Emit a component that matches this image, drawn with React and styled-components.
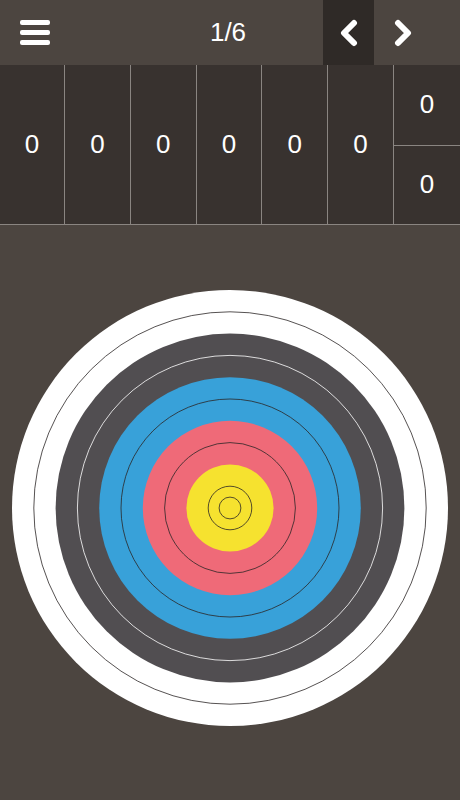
import React from 'react';
import styled, { createGlobalStyle } from 'styled-components';

const GlobalStyle = createGlobalStyle`
  html, body {
    margin: 0;
    padding: 0;
    background: #4c4540;
    font-family: "Liberation Sans", Arial, sans-serif;
  }
`;

const Page = styled.div`
  width: 460px;
  height: 800px;
  display: flex;
  flex-direction: column;
  background: #4c4540;
  overflow: hidden;
`;

const Toolbar = styled.div`
  height: 65px;
  display: grid;
  grid-template-columns: 70px 1fr 51px 86px;
  align-items: stretch;
  color: #fff;
`;

const MenuButton = styled.div`
  display: flex;
  flex-direction: column;
  justify-content: center;
  gap: 5px;
  padding-left: 20px;
`;

const Bar = styled.span`
  display: block;
  width: 30px;
  height: 5px;
  border-radius: 2px;
  background: #fff;
`;

const Title = styled.div`
  display: flex;
  align-items: center;
  justify-content: center;
  font-size: 26px;
  padding-left: 63px;
`;

const NavButton = styled.div`
  display: flex;
  align-items: center;
  justify-content: ${p => (p.$next ? 'flex-start' : 'center')};
  padding-left: ${p => (p.$next ? '19px' : '0')};
  background: ${p => (p.$active ? '#2f2a27' : 'transparent')};
`;

const Scores = styled.div`
  height: 159px;
  display: grid;
  grid-template-columns: 64px repeat(5, 65.8px) 1fr;
  background: #38322f;
  border-bottom: 1px solid #8a8581;
`;

const Cell = styled.div`
  display: flex;
  align-items: center;
  justify-content: center;
  color: #fff;
  font-size: 26px;
  border-left: ${p => (p.$first ? 'none' : '1px solid #8a8581')};
`;

const SplitCell = styled.div`
  display: grid;
  grid-template-rows: 1fr 1fr;
  border-left: 1px solid #8a8581;
`;

const Half = styled.div`
  display: flex;
  align-items: center;
  justify-content: center;
  color: #fff;
  font-size: 26px;
  border-top: ${p => (p.$bottom ? '1px solid #8a8581' : 'none')};
`;

const TargetArea = styled.div`
  flex: 1;
  display: flex;
  justify-content: center;
  padding-top: 65px;
`;

const Chevron = ({ dir }) => (
  <svg width="20" height="28" viewBox="0 0 20 28">
    <polyline
      points={dir === 'left' ? '15,4 5,14 15,24' : '5,4 15,14 5,24'}
      fill="none"
      stroke="#fff"
      strokeWidth="6"
      strokeLinecap="round"
      strokeLinejoin="round"
    />
  </svg>
);

const rings = [
  { r: 218, fill: '#ffffff' },
  { r: 174.4, fill: '#514e51' },
  { r: 130.8, fill: '#38a1d9' },
  { r: 87.2, fill: '#ef6a78' },
  { r: 43.6, fill: '#f6e22f' },
];

const lines = [
  { r: 196.2, stroke: '#2b2626' },
  { r: 152.6, stroke: '#ffffff' },
  { r: 109, stroke: '#2b2626' },
  { r: 65.4, stroke: '#2b2626' },
  { r: 21.8, stroke: '#2b2626' },
  { r: 10.9, stroke: '#2b2626' },
];

const Target = () => (
  <svg width="436" height="436" viewBox="-218 -218 436 436">
    {rings.map(ring => (
      <circle key={ring.r} cx="0" cy="0" r={ring.r} fill={ring.fill} />
    ))}
    {lines.map(line => (
      <circle key={line.r} cx="0" cy="0" r={line.r} fill="none" stroke={line.stroke} strokeWidth="0.8" />
    ))}
  </svg>
);

const ends = [0, 0, 0, 0, 0, 0];

export default function App() {
  return (
    <Page>
      <GlobalStyle />
      <Toolbar>
        <MenuButton>
          <Bar />
          <Bar />
          <Bar />
        </MenuButton>
        <Title>1/6</Title>
        <NavButton $active>
          <Chevron dir="left" />
        </NavButton>
        <NavButton $next>
          <Chevron dir="right" />
        </NavButton>
      </Toolbar>
      <Scores>
        {ends.map((v, i) => (
          <Cell key={i} $first={i === 0}>{v}</Cell>
        ))}
        <SplitCell>
          <Half>0</Half>
          <Half $bottom>0</Half>
        </SplitCell>
      </Scores>
      <TargetArea>
        <Target />
      </TargetArea>
    </Page>
  );
}
